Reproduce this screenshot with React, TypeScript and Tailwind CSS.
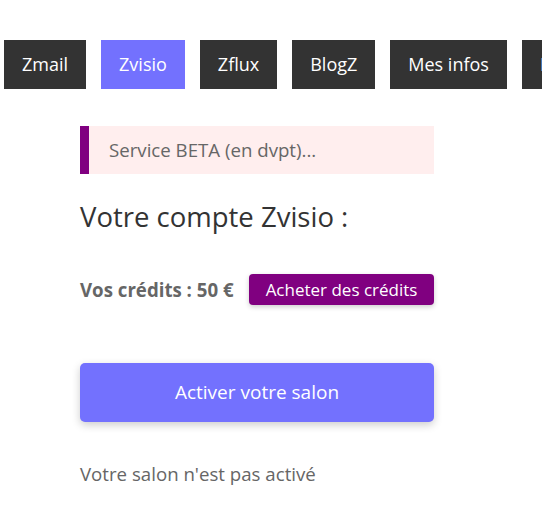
export default function App() {
  const tabs = ["Zmail", "Zvisio", "Zflux", "BlogZ", "Mes infos", "Déconnexion"];
  return (
    <div className="w-[542px] h-[513px] overflow-hidden bg-white" style={{ fontFamily: '"Open Sans", sans-serif' }}>
      <nav className="flex gap-[15px] pl-[4px] pt-[40px] whitespace-nowrap">
        {tabs.map((t) => (
          <div
            key={t}
            className={`shrink-0 h-[49px] px-[18px] flex items-center text-[18px] text-white ${t === "Zvisio" ? "bg-[#7371fe]" : "bg-[#333333]"}`}
          >
            {t}
          </div>
        ))}
      </nav>
      <main className="ml-[80px] w-[354px] pt-[37px]">
        <div className="h-[48px] flex items-center border-l-[9px] border-[#800080] bg-[#ffeeee] pl-[20px] text-[18.66px] text-[#666666]">
          Service BETA (en dvpt)...
        </div>
        <h1 className="mt-[25px] text-[27.5px] leading-[36px] text-[#333333]">Votre compte Zvisio :</h1>
        <div className="mt-[39px] flex items-center gap-[15px] whitespace-nowrap">
          <span className="shrink-0 text-[18.66px] font-bold text-[#666666]">Vos crédits : 50 €</span>
          <button className="shrink-0 h-[31px] px-[17px] rounded-[4px] bg-[#800080] text-white text-[17px] shadow-[0_2px_5px_rgba(0,0,0,0.2)]">
            Acheter des crédits
          </button>
        </div>
        <button className="mt-[58px] w-full h-[59px] rounded-[5px] bg-[#7371fe] text-white text-[19px] shadow-[0_3px_8px_rgba(0,0,0,0.2)]">
          Activer votre salon
        </button>
        <p className="mt-[38px] text-[18.66px] text-[#666666]">Votre salon n'est pas activé</p>
      </main>
    </div>
  );
}
